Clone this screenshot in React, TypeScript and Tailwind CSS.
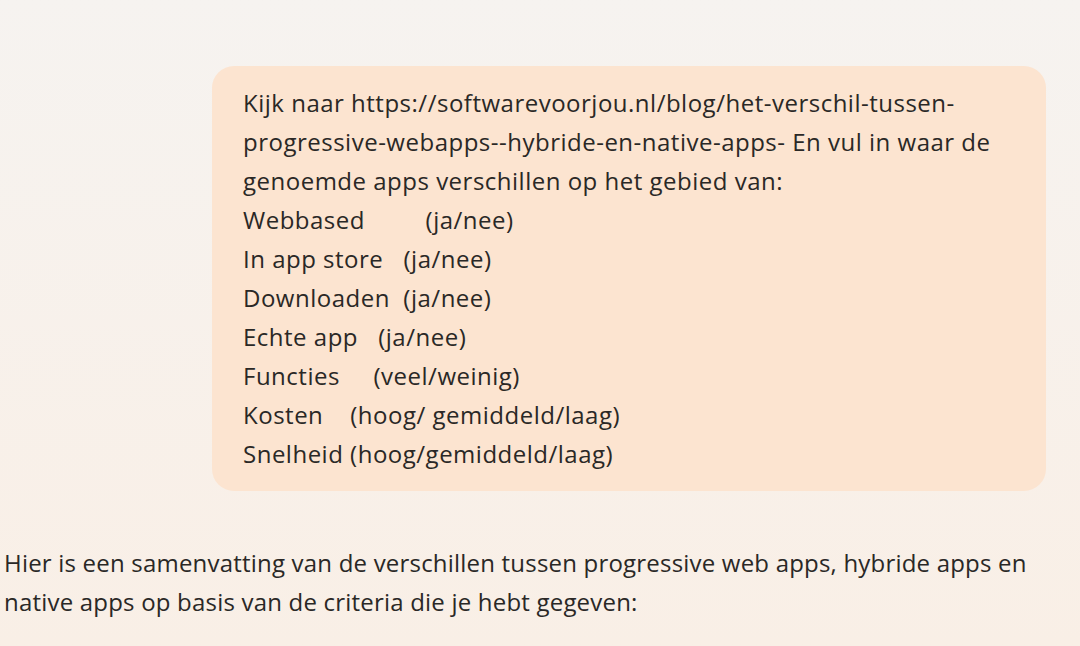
const rows: [string, string][] = [
  ["Webbased         ", "(ja/nee)"],
  ["In app store   ", "(ja/nee)"],
  ["Downloaden  ", "(ja/nee)"],
  ["Echte app   ", "(ja/nee)"],
  ["Functies     ", "(veel/weinig)"],
  ["Kosten    ", "(hoog/ gemiddeld/laag)"],
  ["Snelheid ", "(hoog/gemiddeld/laag)"],
]

const App = () => {
  return (
    <div
      className="w-full h-[646px] overflow-hidden bg-gradient-to-b from-[#f6f3f0] to-[#f9efe6] text-[#2a2826] text-[24px] tracking-[0.5px] leading-[39px]"
      style={{ fontFamily: '"Open Sans", "Noto Sans", sans-serif' }}
    >
      <div className="flex flex-col pt-[66px] pl-[4px] pr-[34px]">
        <div className="ml-auto w-[834px] rounded-[22px] bg-[#fce4d0] pl-[31px] pr-[20px] pt-[17px] pb-[18px]">
          <p>
            Kijk naar https://softwarevoorjou.nl/blog/het-verschil-tussen-
            <br />
            progressive-webapps--hybride-en-native-apps- En vul in waar de
            <br />
            genoemde apps verschillen op het gebied van:
          </p>
          {rows.map(([label, value]) => (
            <p key={label} className="whitespace-pre">
              {label}
              {value}
            </p>
          ))}
        </div>
        <p className="mt-[52px] whitespace-nowrap tracking-[0.2px]">
          Hier is een samenvatting van de verschillen tussen progressive web apps, hybride apps en
          <br />
          native apps op basis van de criteria die je hebt gegeven:
        </p>
      </div>
    </div>
  )
}

export default App
